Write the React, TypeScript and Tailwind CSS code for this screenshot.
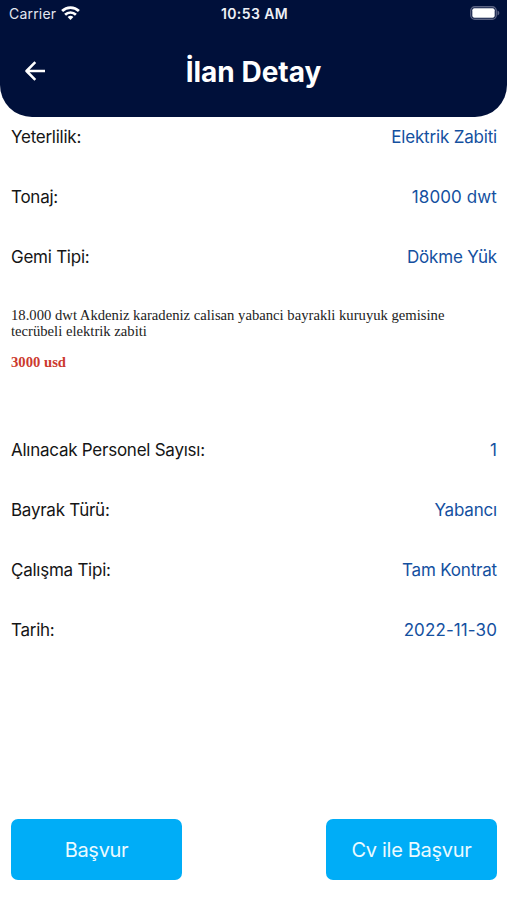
import React from 'react';

const topRows = [
  { label: 'Yeterlilik:', value: 'Elektrik Zabiti' },
  { label: 'Tonaj:', value: '18000 dwt', numeric: true },
  { label: 'Gemi Tipi:', value: 'Dökme Yük' },
];

const bottomRows = [
  { label: 'Alınacak Personel Sayısı:', value: '1', numeric: true },
  { label: 'Bayrak Türü:', value: 'Yabancı' },
  { label: 'Çalışma Tipi:', value: 'Tam Kontrat' },
  { label: 'Tarih:', value: '2022-11-30', numeric: true },
];

function Row({ label, value, numeric }: { label: string; value: string; numeric?: boolean }) {
  return (
    <div className="flex h-[60px] items-start justify-between text-[17px] leading-6">
      <span className="tracking-[-0.25px] text-[#151515]">{label}</span>
      <span className={numeric ? 'tracking-[0.1px] text-[#14509f]' : 'tracking-[-0.18px] text-[#14509f]'}>{value}</span>
    </div>
  );
}

export default function App() {
  return (
    <div className="flex h-[900px] w-[507px] flex-col bg-white font-[Inter,sans-serif]">
      <header className="h-[117px] shrink-0 rounded-b-[32px] bg-[#00103a] text-white">
        <div className="grid h-7 grid-cols-3 items-center pl-[9px] pr-[7px] text-sm">
          <div className="flex items-center gap-[5px] text-[#e4e7f0]">
            <span className="tracking-[0.2px]">Carrier</span>
            <svg width="19" height="14" viewBox="0 0 19 14" fill="none" stroke="white" strokeWidth="2.7" className="-mt-0.5">
              <path d="M1.1 5a11.9 11.9 0 0 1 16.8 0M4.1 8.7a7.7 7.7 0 0 1 10.8 0" />
              <path d="M9.5 14 6.6 11.1a4.2 4.2 0 0 1 5.8 0z" fill="white" stroke="none" />
            </svg>
          </div>
          <span className="text-center font-semibold tracking-[0.4px] text-[#eef0f6]">10:53 AM</span>
          <svg className="-mt-0.5 justify-self-end" width="30" height="14" viewBox="0 0 30 14" fill="none">
            <rect x="0.75" y="0.75" width="25.5" height="12.5" rx="4" stroke="#5c6484" strokeWidth="1.3" />
            <rect x="2.3" y="2.3" width="22.4" height="9.4" rx="2" fill="white" />
            <path d="M27.5 4.5c2.4 1 2.4 4 0 5z" fill="#5c6484" />
          </svg>
        </div>
        <div className="grid h-[88px] grid-cols-[1fr_auto_1fr] items-center pl-[25px] pr-[25px]">
          <svg width="20" height="20" viewBox="0 0 20 20" fill="none" stroke="currentColor" strokeWidth="2.5" strokeLinejoin="round" className="-mt-0.5">
            <path d="M20 10H2M10.3 1.200 1.500 10l8.800 8.800" />
          </svg>
          <h1 className="text-[28px] font-bold">İlan Detay</h1>
        </div>
      </header>

      <main className="flex-1 pl-[11px] pr-2.5 pt-2">
        {topRows.map((r) => <Row key={r.label} {...r} />)}
        <div className="h-[133px] pt-0.5 font-['Liberation_Serif',serif] text-[14.67px] leading-4">
          <p className="w-[460px] text-[#222222]">
            18.000 dwt Akdeniz karadeniz calisan yabanci bayrakli kuruyuk gemisine tecrübeli elektrik zabiti
          </p>
          <p className="mt-[15px] font-bold text-[#cc3a2e]">3000 usd</p>
        </div>
        {bottomRows.map((r) => <Row key={r.label} {...r} />)}
      </main>

      <footer className="flex h-[81px] shrink-0 items-start justify-between pl-[11px] pr-2.5 text-xl tracking-[-0.3px] text-[#eafaff]">
        <button className="h-[61px] w-[171px] rounded-[7px] bg-[#00adf7]">Başvur</button>
        <button className="h-[61px] w-[171px] rounded-[7px] bg-[#00adf7]">Cv ile Başvur</button>
      </footer>
    </div>
  );
}
